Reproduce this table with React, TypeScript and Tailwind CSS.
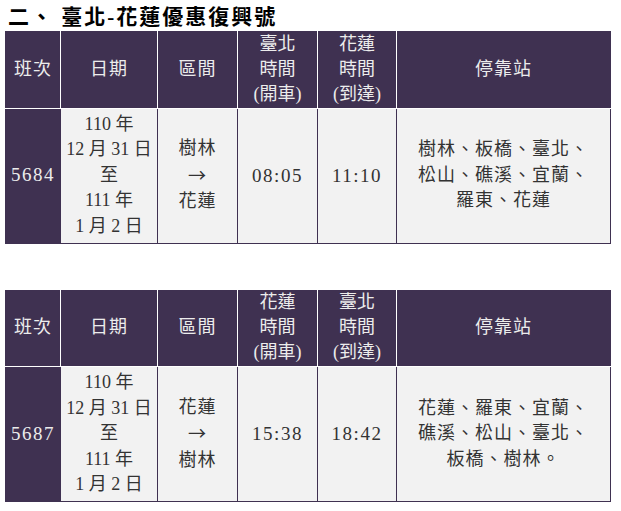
const purple = 'bg-[#3f3151]';

type Train = {
  no: string;
  fromLabel: string;
  toLabel: string;
  route: [string, string];
  dep: string;
  arr: string;
  stops: string[];
};

const trains: Train[] = [
  {
    no: '5684',
    fromLabel: '臺北',
    toLabel: '花蓮',
    route: ['樹林', '花蓮'],
    dep: '08:05',
    arr: '11:10',
    stops: ['樹林、板橋、臺北、', '松山、礁溪、宜蘭、', '羅東、花蓮'],
  },
  {
    no: '5687',
    fromLabel: '花蓮',
    toLabel: '臺北',
    route: ['花蓮', '樹林'],
    dep: '15:38',
    arr: '18:42',
    stops: ['花蓮、羅東、宜蘭、', '礁溪、松山、臺北、', '板橋、樹林。'],
  },
];

const th = `${purple} text-[#ececec] font-normal border border-white border-t-0 align-middle text-center leading-[25px]`;
const td = 'bg-[#f2f2f2] text-[#333333] border border-[#3f3151] align-middle text-center leading-[25.6px]';
const cjk = { fontFamily: '"Noto Sans CJK TC", sans-serif' };

function Paren({ text }: { text: string }) {
  return (
    <span className="whitespace-nowrap">
      <span className="inline-block w-[13px] text-right">(</span>
      {text}
      <span className="inline-block w-[13px] text-left">)</span>
    </span>
  );
}

function Schedule({ t }: { t: Train }) {
  return (
    <table className="border-collapse table-fixed w-[605px] text-[18px] tracking-[1px]">
      <colgroup>
        <col className="w-[55px]" />
        <col className="w-[97px]" />
        <col className="w-[80px]" />
        <col className="w-[80px]" />
        <col className="w-[79px]" />
        <col className="w-[214px]" />
      </colgroup>
      <thead>
        <tr className="h-[77px]">
          <th className={`${th} border-l-[#3f3151]`}>班次</th>
          <th className={th}>日期</th>
          <th className={th}>區間</th>
          <th className={`${th} tracking-normal`}>
            {t.fromLabel}
            <br />
            時間
            <br />
            <Paren text="開車" />
          </th>
          <th className={`${th} tracking-normal`}>
            {t.toLabel}
            <br />
            時間
            <br />
            <Paren text="到達" />
          </th>
          <th className={`${th} border-r-[#3f3151]`}>停靠站</th>
        </tr>
      </thead>
      <tbody>
        <tr className="h-[135px]">
          <td className={`${purple} text-[#ececec] border border-[#3f3151] text-center align-middle tracking-[1.5px] text-[19px]`}>
            {t.no}
          </td>
          <td className={`${td} whitespace-nowrap tracking-normal`}>
            110 年
            <br />
            12 月 31 日
            <br />
            至
            <br />
            111 年
            <br />
            1 月 2 日
          </td>
          <td className={td}>
            {t.route[0]}
            <br />
            <span style={cjk}>→</span>
            <br />
            {t.route[1]}
          </td>
          <td className={`${td} text-[19px] tracking-[1.5px]`}>{t.dep}</td>
          <td className={`${td} text-[19px] tracking-[1.5px]`}>{t.arr}</td>
          <td className={td}>
            {t.stops.map((s, i) => (
              <div key={i}>{s}</div>
            ))}
          </td>
        </tr>
      </tbody>
    </table>
  );
}

export default function App() {
  return (
    <div
      className="w-[621px] h-[511px] bg-white pl-[5px] pt-[4px] overflow-hidden"
      style={{ fontFamily: '"Liberation Serif", "Noto Sans CJK TC", serif' }}
    >
      <h2 className="text-[21px] font-bold leading-[27px] pl-[3px] tracking-[2px] text-black whitespace-pre">
        二、 臺北-花蓮優惠復興號
      </h2>
      <div className="flex flex-col gap-[46px]">
        {trains.map((t) => (
          <Schedule key={t.no} t={t} />
        ))}
      </div>
    </div>
  );
}
